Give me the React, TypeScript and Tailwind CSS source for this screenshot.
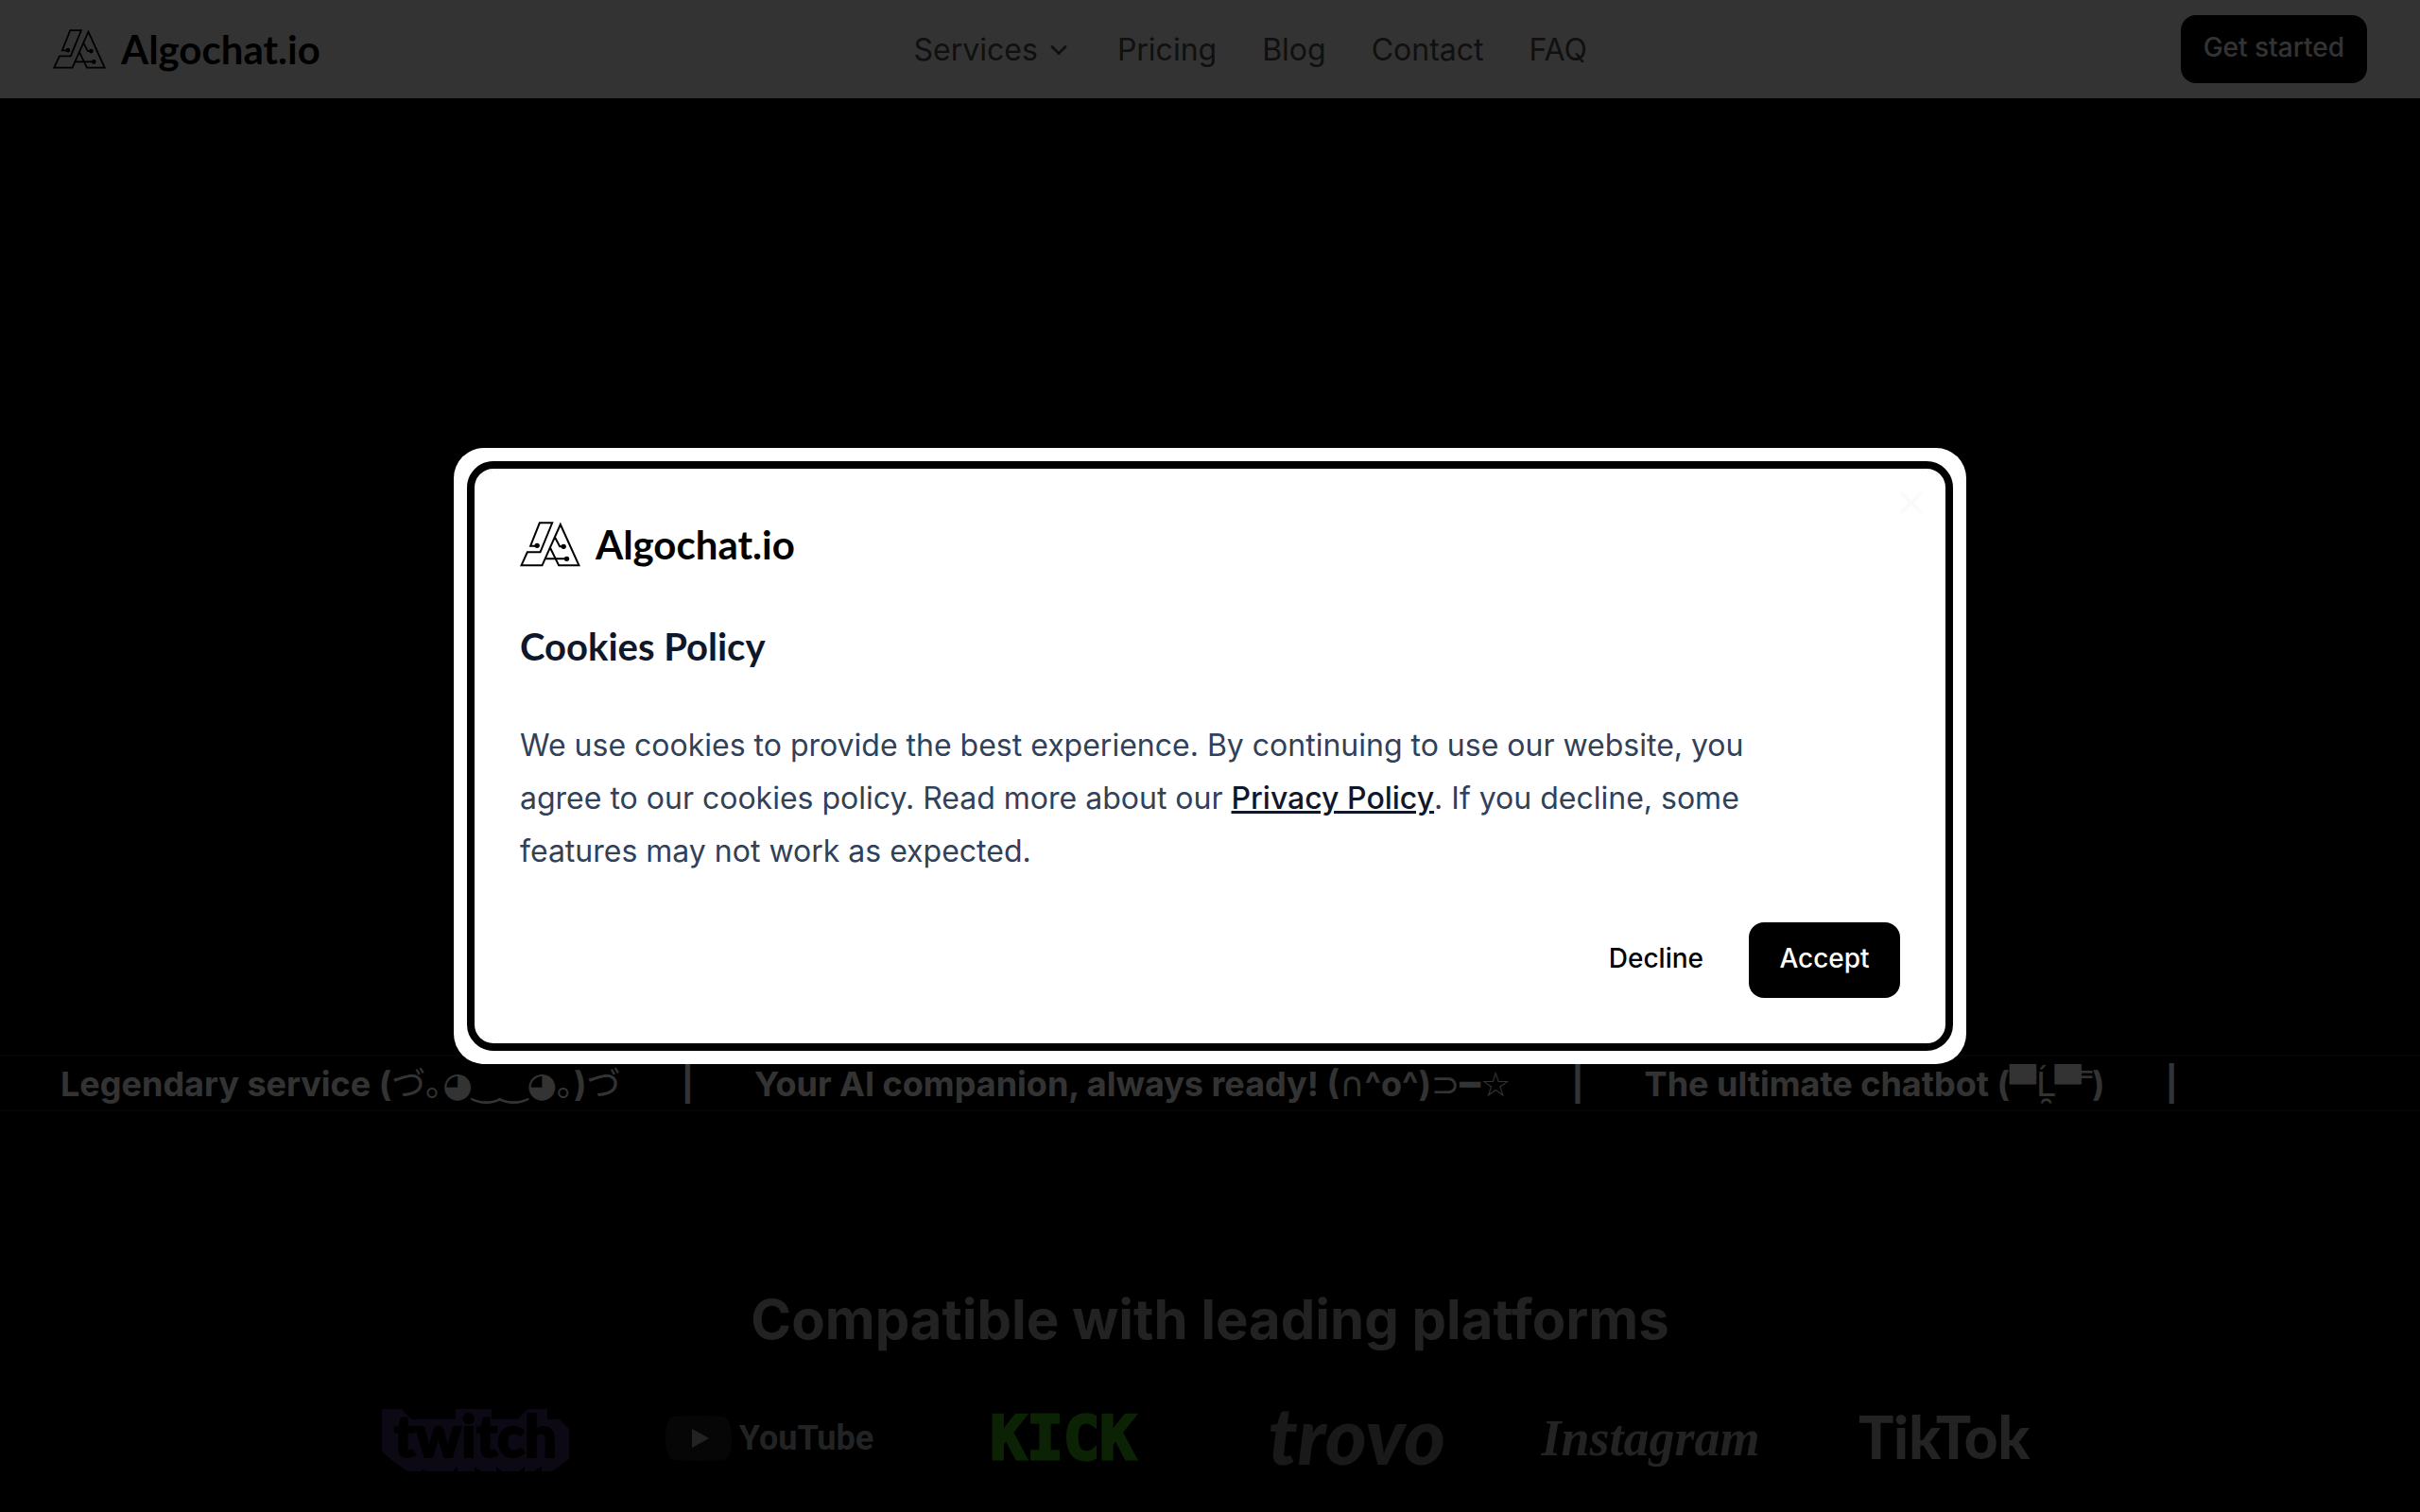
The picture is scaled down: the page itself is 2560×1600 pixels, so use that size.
import React from "react";
import { ChevronDown, X } from "lucide-react";

function LogoMark({ className }: { className: string }) {
  return (
    <svg viewBox="270 276 191 144" className={className} fill="none" stroke="currentColor" strokeWidth="6" aria-hidden="true">
      <path d="M324 353H303L332 280H372L334 373H293L274 415H340L398 285L457 415H393L366 360" />
      <path d="M380 325L396 355H408M348 394H418" />
      <g fill="currentColor" stroke="none">
        <circle cx="324" cy="352" r="8" />
        <circle cx="408" cy="355" r="8" />
        <circle cx="418" cy="394" r="8" />
      </g>
    </svg>
  );
}

const links = ["Pricing", "Blog", "Contact", "FAQ"];

function Header() {
  return (
    <header className="flex h-[104px] items-center justify-between bg-white px-14">
      <a href="#home" className="flex items-center gap-4 text-black">
        <LogoMark className="h-[42px] w-14" />
        <span className="font-['Lato'] text-[42px] leading-none font-bold">Algochat.io</span>
      </a>
      <nav className="flex items-center gap-12 pt-0.5 text-[32px] text-[#505050]">
        <button type="button" className="flex items-center gap-2">
          Services
          <ChevronDown className="size-7" strokeWidth={2.5} />
        </button>
        {links.map((l) => (
          <a key={l} href={"#" + l.toLowerCase()}>
            {l}
          </a>
        ))}
      </nav>
      <button type="button" className="h-[72px] rounded-2xl bg-black px-6 pb-1 text-[28px] font-medium text-white">
        Get started
      </button>
    </header>
  );
}

function Symbols({ children }: { children: React.ReactNode }) {
  return <span className="font-['DejaVu_Sans','Noto_Sans_CJK_JP',sans-serif] font-normal">{children}</span>;
}

function Marquee() {
  return (
    <div className="flex h-[60px] items-center gap-16 overflow-hidden border-y-2 border-[#1c1c1c] px-16 pt-0.5 text-4xl font-bold whitespace-nowrap text-white">
      <span>
        Legendary service (<Symbols>づ｡◕‿‿◕｡</Symbols>)<Symbols>づ</Symbols>
      </span>
      <span>|</span>
      <span>
        Your AI companion, always ready! (<Symbols>∩</Symbols>^o^)<Symbols>⊃━☆</Symbols>
      </span>
      <span>|</span>
      <span>
        The ultimate chatbot (<Symbols>▀̿Ĺ̯▀̿ ̿</Symbols>)
      </span>
      <span>|</span>
    </div>
  );
}

function Twitch() {
  return (
    <svg viewBox="0 0 198 66" className="h-[66px] w-[198px]" role="img" aria-label="twitch">
      <path
        fill="#3c2864"
        d="M0 0H21L31 11H78V0H116V11H130L143 11L154 0H175V11H188L198 21V53L180 66H169V61L161 66H151V61L145 66H127L121 61V66H105L98 61V66H80V61L75 66H48L42 64V66H27L10 54L0 45Z"
      />
      <text x="99" y="51" textAnchor="middle" fontFamily="Lato" fontWeight="900" fontSize="60" fill="#000" stroke="#000" strokeWidth="2">
        twitch
      </text>
    </svg>
  );
}

function Platforms() {
  return (
    <section className="flex flex-col items-center pt-[184px]">
      <h2 className="text-[58px] leading-[72px] font-bold text-[#aaaaaa] [font-variant-ligatures:none]">Compatible with leading platforms</h2>
      <ul className="mt-11 grid h-20 w-full max-w-[1864px] grid-cols-6 items-center justify-items-center leading-none text-[#b0b0b0]">
        <li className="pt-1">
          <Twitch />
        </li>
        <li className="flex items-center gap-2">
          <svg viewBox="0 0 70 48" className="h-12 w-[70px]" aria-hidden="true">
            <path d="M10 1Q35 -1 60 1Q70 2 70 24T60 47Q35 49 10 47Q0 46 0 24T10 1Z" fill="#202020" />
            <path d="M28 14V34L46 24Z" fill="#b0b0b0" />
          </svg>
          <span className="font-['Roboto'] text-[36px] font-bold">YouTube</span>
        </li>
        <li className="font-['DejaVu_Sans_Mono'] text-[64px] font-bold text-[#3caa19] [-webkit-text-stroke:3px_#3caa19]">KICK</li>
        <li className="pb-2 font-['Lato'] text-[84px] font-black text-[#7d7d7d] italic">trovo</li>
        <li className="font-['Liberation_Serif'] text-[54px] font-bold italic">Instagram</li>
        <li className="pb-1 font-['Lato'] text-[62px] font-black">TikTok</li>
      </ul>
    </section>
  );
}

function CookieDialog() {
  return (
    <div className="fixed inset-0 flex items-center justify-center bg-black/80">
      <div role="dialog" aria-modal="true" aria-labelledby="cookie-title" className="w-full max-w-[1600px] rounded-[32px] bg-white p-3.5">
        <div className="relative rounded-[28px] border-8 border-black p-12 pt-14">
          <button type="button" aria-label="Close" className="absolute top-4 right-4 text-[#fafafa]">
            <X className="size-10" />
          </button>
          <div className="flex h-12 items-center gap-4 text-black">
            <LogoMark className="h-12 w-16" />
            <span className="font-['Lato'] text-[42px] leading-none font-bold">Algochat.io</span>
          </div>
          <h1 id="cookie-title" className="mt-14 font-['Lato'] text-[40px] leading-[56px] font-bold text-slate-900">
            Cookies Policy
          </h1>
          <p className="mt-[49px] max-w-[1320px] text-[32px] leading-[56px] text-slate-700">
            We use cookies to provide the best experience. By continuing to use our website, you agree to our cookies policy. Read more about our{" "}
            <a href="#privacy" className="font-medium text-slate-900 underline">
              Privacy Policy
            </a>
            . If you decline, some features may not work as expected.
          </p>
          <div className="mt-[47px] flex justify-end gap-4 text-[28px] font-medium">
            <button type="button" className="h-20 rounded-2xl px-8 pb-1 text-black">
              Decline
            </button>
            <button type="button" className="h-20 w-40 rounded-2xl bg-black pb-1 text-white">
              Accept
            </button>
          </div>
        </div>
      </div>
    </div>
  );
}

export default function App() {
  return (
    <div className="h-screen overflow-hidden bg-black font-['Inter',sans-serif]">
      <Header />
      <main>
        <div className="h-[1012px]" />
        <Marquee />
        <Platforms />
      </main>
      <CookieDialog />
    </div>
  );
}
